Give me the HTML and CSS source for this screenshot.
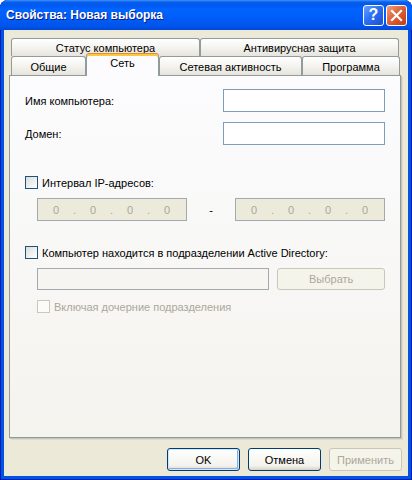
FILE: index.html
```html
<!DOCTYPE html>
<html lang="ru">
<head>
    <meta charset="UTF-8">
    <title>Свойства: Новая выборка</title>
    <link rel="stylesheet" href="styles.css">
</head>
<body>
<div class="window">
    <div class="titlebar">
        <span class="title">Свойства: Новая выборка</span>
        <span class="tbtn help">?</span>
        <span class="tbtn close">
            <svg width="13" height="13" viewBox="0 0 13 13">
                <path d="M2 2 L11 11 M11 2 L2 11" stroke="#fff" stroke-width="2.2" stroke-linecap="square"/>
            </svg>
        </span>
    </div>
    <div class="frame">
        <div class="tabs">
            <div class="tabrow back">
                <span class="tab b1">Статус компьютера</span>
                <span class="tab b2">Антивирусная защита</span>
            </div>
            <div class="tabrow front">
                <span class="tab t1">Общие</span>
                <span class="tab t2 active">Сеть</span>
                <span class="tab t3">Сетевая активность</span>
                <span class="tab t4">Программа</span>
            </div>
        </div>
        <div class="panel">
            <div class="field">
                <span class="label">Имя компьютера:</span>
                <span class="edit"></span>
            </div>
            <div class="field second">
                <span class="label">Домен:</span>
                <span class="edit"></span>
            </div>

            <div class="check range">
                <span class="box"></span>
                <span>Интервал IP-адресов:</span>
            </div>
            <div class="iprow">
                <span class="ip"><i>0</i><b>.</b><i>0</i><b>.</b><i>0</i><b>.</b><i>0</i></span>
                <span class="dash">-</span>
                <span class="ip"><i>0</i><b>.</b><i>0</i><b>.</b><i>0</i><b>.</b><i>0</i></span>
            </div>

            <div class="check ad">
                <span class="box"></span>
                <span>Компьютер находится в подразделении Active Directory:</span>
            </div>
            <div class="adrow">
                <span class="edit off"></span>
                <span class="btn disabled">Выбрать</span>
            </div>
            <div class="check sub disabled">
                <span class="box"></span>
                <span>Включая дочерние подразделения</span>
            </div>
        </div>
        <div class="buttons">
            <span class="btn default">OK</span>
            <span class="btn">Отмена</span>
            <span class="btn disabled">Применить</span>
        </div>
    </div>
</div>
</body>
</html>
```

FILE: styles.css
```css
body {
    margin: 0;
    background: #fff;
    font-family: "Liberation Sans", Arial, sans-serif;
    font-size: 11px;
    color: #000;
}

.window {
    width: 412px;
    height: 480px;
    display: flex;
    flex-direction: column;
    background: #0054e3;
    border-radius: 8px 8px 0 0;
    box-shadow: inset 1px 0 #0019b0, inset -1px 0 #0019b0, inset 0 -1px #0019b0;
    box-sizing: border-box;
}

/* title bar */
.titlebar {
    height: 30px;
    display: flex;
    align-items: center;
    padding: 0 5px 0 6px;
    border-radius: 8px 8px 0 0;
    background: linear-gradient(#3d95ff 0, #0a5fea 2px, #0058ee 5px, #0064ff 9px, #005cf8 18px, #0055eb 26px, #0048d6 30px);
}

.title {
    flex: 1;
    color: #fff;
    font-size: 12px;
    font-weight: bold;
    text-shadow: 1px 1px 0 #0a1e8a;
}

.tbtn {
    width: 19px;
    height: 19px;
    border: 1px solid #fff;
    border-radius: 3px;
    display: flex;
    align-items: center;
    justify-content: center;
    color: #fff;
}

.help {
    margin-right: 2px;
    font-size: 16px;
    font-weight: bold;
    background: linear-gradient(135deg, #6aa2ff 0, #2d6ff0 45%, #1b4fd6 100%);
}

.close {
    background: linear-gradient(135deg, #f0a07c 0, #e0623a 45%, #c23d12 100%);
}

/* body of the dialog */
.frame {
    flex: 1;
    margin: 0 4px 4px;
    padding: 8px 7px 0 5px;
    background: #ece9d8;
    display: flex;
    flex-direction: column;
}

.tabs {
    height: 37px;
    display: flex;
    flex-direction: column;
}

.tabrow {
    display: flex;
}

.tabrow.back {
    height: 18px;
    padding-left: 2px;
}

.tabrow.front {
    height: 19px;
    padding-left: 2px;
}

.tab {
    box-sizing: border-box;
    border: 1px solid #919b9c;
    border-bottom: none;
    border-radius: 3px 3px 0 0;
    background: linear-gradient(#ffffff, #f4f3ef 50%, #e6e4dc);
    display: flex;
    align-items: center;
    justify-content: center;
    padding-top: 1px;
}

.b1 { width: 189px; }
.b2 { width: 199px; }
.t1 { width: 75px; }
.t2 { width: 73px; }
.t3 { width: 143px; }
.t4 { width: 98px; }

.tab.active {
    position: relative;
    z-index: 1;
    height: 23px;
    margin-top: -3px;
    padding-top: 0;
    padding-bottom: 4px;
    border-top: 1px solid #e68b2c;
    box-shadow: inset 0 2px #ffc83c;
    background: #fcfcfe;
}

.panel {
    height: 363px;
    box-sizing: border-box;
    border: 1px solid #919b9c;
    background: linear-gradient(#fcfcfe, #f4f3ee);
    box-shadow: 1px 1px 0 #c6c4b8, 2px 2px 0 #dedbcc;
    padding: 13px 15px 0 15px;
    display: flex;
    flex-direction: column;
}

.field {
    display: flex;
    align-items: center;
    height: 23px;
}

.field.second {
    margin-top: 10px;
}

.label {
    flex: 1;
}

.edit {
    box-sizing: border-box;
    width: 162px;
    height: 23px;
    border: 1px solid #7f9db9;
    background: #fff;
}

.edit.off {
    width: 233px;
    height: 22px;
    border-color: #a3a9ae;
    background: #f6f5f1;
}

.check {
    display: flex;
    align-items: center;
    height: 13px;
}

.check .box {
    box-sizing: border-box;
    width: 13px;
    height: 13px;
    margin-right: 4px;
    border: 1px solid #1c5180;
    background: linear-gradient(135deg, #dcdcd7, #ffffff);
}

.check.range {
    margin-top: 31px;
}

.check.ad {
    margin-top: 25px;
}

.check.sub {
    margin-top: 10px;
    padding-left: 12px;
}

.check.disabled {
    color: #aca899;
}

.check.disabled .box {
    border-color: #cac8bb;
    background: #fbfbf8;
}

.iprow {
    display: flex;
    align-items: center;
    margin-top: 9px;
    padding-left: 12px;
}

.ip {
    box-sizing: border-box;
    width: 150px;
    height: 23px;
    border: 1px solid #a3a9ae;
    background: #ebeadb;
    color: #aca899;
    display: flex;
    align-items: center;
    padding-left: 5px;
}

.ip i {
    font-style: normal;
    width: 26px;
    text-align: center;
}

.ip b {
    font-weight: normal;
    width: 11px;
    text-align: center;
}

.dash {
    width: 48px;
    text-align: center;
}

.adrow {
    display: flex;
    margin-top: 9px;
    padding-left: 12px;
    gap: 8px;
}

.adrow .btn {
    width: 108px;
    height: 22px;
}

/* push buttons */
.btn {
    box-sizing: border-box;
    width: 73px;
    height: 23px;
    border: 1px solid #003c74;
    border-radius: 3px;
    background: linear-gradient(#ffffff, #f3f2ec 80%, #d8d2c6);
    display: flex;
    align-items: center;
    justify-content: center;
}

.btn.default {
    box-shadow: inset 0 0 0 1px #cee7ff, inset -1px -1px 0 1px #89ade4;
}

.btn.disabled {
    border-color: #c9c7ba;
    background: #f5f4ea;
    color: #aca899;
}

.buttons {
    display: flex;
    justify-content: flex-end;
    gap: 8px;
    margin-top: 10px;
    margin-right: -1px;
}
```
